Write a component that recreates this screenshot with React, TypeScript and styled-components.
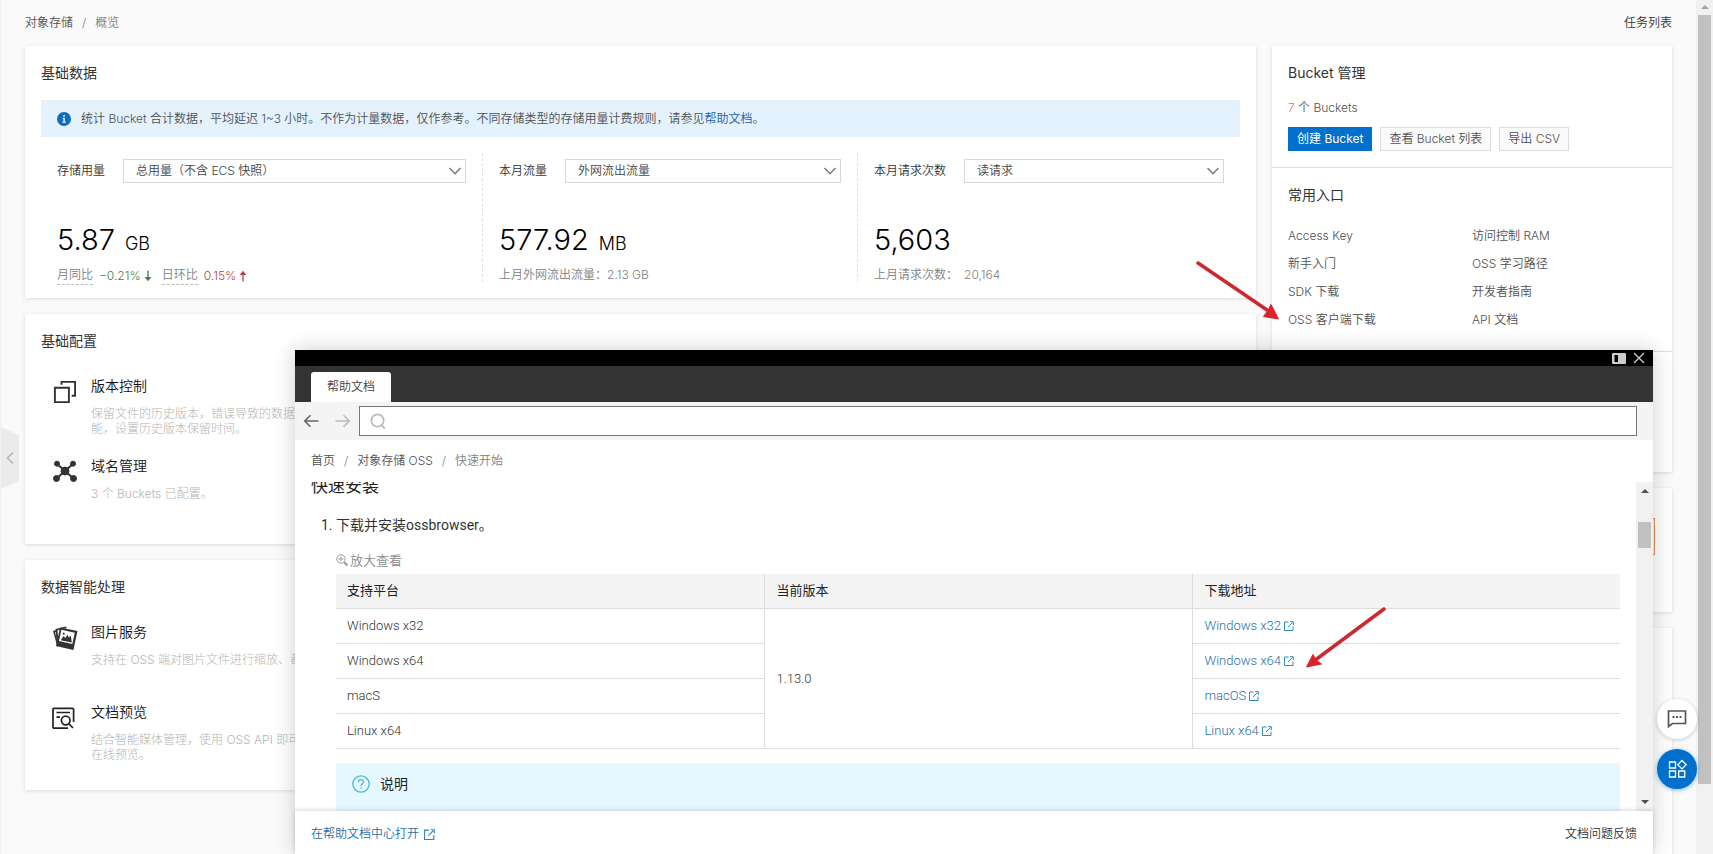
import React from 'react';
import styled, { createGlobalStyle, css } from 'styled-components';

const Global = createGlobalStyle`
  *, *::before, *::after { box-sizing: border-box; }
  html, body, #root { height: 100%; }
  body { margin: 0; background: #fafafa; overflow: hidden; }
  body, button, input, select, table {
    font-family: Inter, "Noto Sans CJK SC", sans-serif;
    font-size: 12px;
    line-height: 16px;
    color: #333;
    font-weight: 350;
  }
  a { color: inherit; text-decoration: none; }
  h1, h2, h3, p, ul, ol { margin: 0; padding: 0; font-weight: 400; }
  ul, ol { list-style: none; }
  svg { display: block; }
`;

/* ---------- page frame ---------- */

const Page = styled.div`
  display: flex;
  height: 100vh;
  overflow: hidden;
  position: relative;
`;

const Main = styled.main`
  flex: 1;
  min-width: 0;
  border-left: 1px solid #f1f1f1;
  padding: 0 24px;
`;

const TopBar = styled.header`
  display: flex;
  justify-content: space-between;
  align-items: center;
  height: 46px;
  padding-bottom: 1px;
`;

const Crumbs = styled.nav`
  display: flex;
  align-items: center;
  gap: 9px;
  color: #808080;
  a { color: #505050; }
`;

const Columns = styled.div`
  display: grid;
  grid-template-columns: minmax(0, 1fr) 400px;
  gap: 16px;
  align-items: start;
`;

const Stack = styled.div`
  display: flex;
  flex-direction: column;
  gap: 16px;
`;

const Card = styled.section<{ $minHeight?: number }>`
  background: #fff;
  box-shadow: 0 1px 4px rgba(0, 0, 0, 0.13);
  min-height: ${p => p.$minHeight ?? 0}px;
`;

const Padded = styled.div`
  padding: 16px;
`;

const CardTitle = styled.h2`
  font-size: 14px;
  line-height: 22px;
  color: #333;
`;

/* ---------- statistics ---------- */

const Notice = styled.div`
  display: flex;
  align-items: center;
  gap: 10px;
  height: 37px;
  margin: 16px 0;
  padding: 0 16px;
  background: #e3f2fd;
  color: #505050;
  a { color: #1a60ad; }
`;

const StatGrid = styled.div`
  display: grid;
  grid-template-columns: 441fr 375fr 383fr;
`;

const Stat = styled.div`
  height: 129px;
  padding: 6px 16px 0;
  & + & { border-left: 1px dashed #e0e0e0; }
`;

const StatHead = styled.label`
  display: flex;
  align-items: center;
  gap: 18px;
  white-space: nowrap;
`;

const SelectWrap = styled.span`
  flex: 1;
  display: grid;
  align-items: center;
  min-width: 0;
  > * { grid-area: 1 / 1; }
  > svg { justify-self: end; margin-right: 4px; pointer-events: none; }
`;

const Select = styled.select`
  appearance: none;
  width: 100%;
  height: 24px;
  padding: 0 24px 0 12px;
  border: 1px solid #d8d8d8;
  border-radius: 0;
  background: #fff;
  color: #444;
`;

const Figure = styled.p`
  display: flex;
  align-items: baseline;
  gap: 10px;
  height: 34px;
  margin-top: 40px;
  font-size: 29px;
  line-height: 34px;
  font-weight: 300;
  color: #000;
  small { font-size: 18px; }
`;

const SubLine = styled.p`
  display: flex;
  align-items: center;
  margin-top: 9px;
  line-height: 18px;
  color: #808080;
  font-weight: 350;
`;

const Term = styled.span`
  border-bottom: 1px dashed #bbb;
  margin-right: 6px;
`;

const Trend = styled.span<{ $up?: boolean }>`
  display: inline-flex;
  align-items: center;
  gap: 3px;
  margin-right: 10px;
  color: ${p => (p.$up ? '#b5443a' : '#3f7d4a')};
`;

const SubValue = styled.span<{ $wide?: boolean }>`
  margin-left: ${p => (p.$wide ? 6 : 0)}px;
`;

/* ---------- feature lists ---------- */

const Feature = styled.li`
  display: grid;
  grid-template-columns: 26px 1fr;
  gap: 13px;
  height: 80px;
  padding-left: 11px;
  &:last-child { height: 72px; }
`;

const FeatureList = styled.ul`
  margin-top: 23px;
`;

const FeatureIcon = styled.span`
  padding-top: 5px;
`;

const FeatureTitle = styled.h3`
  font-size: 14px;
  line-height: 22px;
  color: #111;
  font-weight: 350;
`;

const FeatureText = styled.p`
  margin-top: 9px;
  line-height: 15px;
  color: #b4b4b4;
  font-weight: 300;
  em { font-style: normal; color: #e8a49e; }
`;

/* ---------- bucket side column ---------- */

const Section = styled.div<{ $height: number }>`
  padding: 16px;
  min-height: ${p => p.$height}px;
  & + & { border-top: 1px solid #ddd; }
`;

const Count = styled.p`
  margin: 16px 0 11px;
  color: #505050;
  font-weight: 350;
  em { font-style: normal; color: #e27a55; }
`;

const ButtonRow = styled.div`
  display: flex;
  gap: 8px;
`;

const Button = styled.button<{ $primary?: boolean }>`
  height: 24px;
  padding: 0 8px;
  border: 1px solid #ddd;
  background: #fafafa;
  color: #505050;
  white-space: nowrap;
  ${p => p.$primary && css`
    border-color: #0070cc;
    background: #0070cc;
    color: #fff;
    font-weight: 400;
  `}
`;

const LinkGrid = styled.div`
  display: grid;
  grid-template-columns: 1fr 1fr;
  margin-top: 16px;
  line-height: 28px;
  color: #505050;
`;

const Alert = styled.div`
  height: 37px;
  margin: 14px 1px 0 0;
  border: 1px solid #e5905f;
  background: #fff0e8;
`;

/* ---------- scroll bars ---------- */

const ScrollTrack = styled.div`
  display: flex;
  flex-direction: column;
  align-items: center;
  flex: none;
  width: 17px;
  background: #f1f1f1;
`;

const ScrollArrow = styled.span<{ $down?: boolean; $faint?: boolean }>`
  width: 0;
  border: 4px solid transparent;
  border-top-width: ${p => (p.$down ? 4 : 0)}px;
  border-bottom-width: ${p => (p.$down ? 0 : 4)}px;
  border-${p => (p.$down ? 'top' : 'bottom')}-color: ${p => (p.$faint ? '#a3a3a3' : '#505050')};
  margin: ${p => (p.$down ? 'auto 0 7px' : p.$faint ? '5px 0 6px' : '7px 0 0')};
`;

const PageThumb = styled.span`
  width: 13px;
  height: 90%;
  background: #c1c1c1;
`;

const DocThumb = styled.span`
  width: 13px;
  height: 26px;
  margin-top: 29px;
  background: #c1c1c1;
`;

/* ---------- floating pieces ---------- */

const Collapse = styled.button`
  position: absolute;
  left: 1px;
  top: 427px;
  width: 18px;
  height: 62px;
  padding: 0;
  border: 0;
  background: #ebebeb;
  clip-path: polygon(0 0, 100% 8px, 100% 54px, 0 100%);
`;

const FloatStack = styled.div`
  position: absolute;
  right: 16px;
  bottom: 65px;
  display: flex;
  flex-direction: column;
  gap: 10px;
`;

const RoundButton = styled.button<{ $blue?: boolean }>`
  display: grid;
  place-items: center;
  width: 40px;
  height: 40px;
  padding: 0;
  border: 0;
  border-radius: 50%;
  background: ${p => (p.$blue ? '#0070cc' : '#fff')};
  box-shadow: 0 1px 4px ${p => (p.$blue ? 'rgba(0, 112, 204, 0.5)' : 'rgba(0, 0, 0, 0.2)')};
`;

const Pointer = styled.svg`
  position: absolute;
  pointer-events: none;
`;

/* ---------- help window ---------- */

const Window = styled.section`
  position: absolute;
  left: 295px;
  right: 60px;
  top: 350px;
  bottom: 0;
  display: flex;
  flex-direction: column;
  background: #fff;
  box-shadow: 0 0 20px rgba(0, 0, 0, 0.2);
`;

const TitleBar = styled.div`
  display: flex;
  justify-content: flex-end;
  align-items: center;
  gap: 7px;
  height: 16px;
  padding-right: 8px;
  background: #000;
`;

const PlainButton = styled.button`
  display: grid;
  place-items: center;
  padding: 0;
  border: 0;
  background: none;
`;

const TabBar = styled.div`
  display: flex;
  align-items: flex-end;
  height: 36px;
  padding-left: 16px;
  background: #333;
`;

const Tab = styled.button`
  width: 80px;
  height: 30px;
  padding: 0;
  border: 0;
  border-radius: 3px 3px 0 0;
  background: #fff;
  color: #444;
`;

const NavBar = styled.div`
  display: flex;
  align-items: center;
  height: 38px;
  padding: 0 16px 0 8px;
  background: #f4f4f4;
`;

const NavButton = styled(PlainButton)`
  width: 16px;
  height: 16px;
  margin-right: 16px;
  & + & { margin-right: 8px; }
`;

const SearchBox = styled.div`
  flex: 1;
  display: grid;
  align-items: center;
  > * { grid-area: 1 / 1; }
  > svg { margin-left: 11px; pointer-events: none; }
`;

const SearchInput = styled.input`
  width: 100%;
  height: 30px;
  padding: 0 8px 0 32px;
  border: 1px solid #777;
  background: #fff;
  outline: 0;
`;

const DocCrumbs = styled.div`
  height: 42px;
  padding: 13px 16px 0;
`;

const DocPane = styled.div`
  flex: 1;
  display: flex;
  min-height: 0;
`;

const DocScroll = styled.div`
  flex: 1;
  min-width: 0;
  overflow: hidden;
  display: flex;
  flex-direction: column;
  justify-content: flex-end;
  padding: 0 16px;
  &, table { font-family: Roboto, "Noto Sans CJK SC", sans-serif; }
`;

const DocHeading = styled.h2`
  font-size: 17px;
  line-height: 24px;
  color: #222;
`;

const Steps = styled.ol`
  margin-top: 15px;
  padding-left: 25px;
  list-style: decimal;
  font-size: 14px;
  line-height: 24px;
  color: #333;
`;

const Enlarge = styled(PlainButton)`
  display: flex;
  align-items: center;
  gap: 2px;
  height: 22px;
  margin-top: 12px;
  margin-bottom: 3px;
  font-size: 13px;
  color: #8c8c8c;
`;

const Table = styled.table`
  width: 100%;
  table-layout: fixed;
  border-collapse: collapse;
  font-size: 13px;
  th, td {
    height: 35px;
    padding: 0 11px;
    text-align: left;
    border-bottom: 1px solid #ddd;
    color: #333;
    font-weight: 350;
  }
  th { background: #f4f4f4; color: #222; font-weight: 400; }
  th + th, td + td { padding-left: 12px; }
  th + th, td[rowspan] { border-left: 1px solid #ddd; }
  td[rowspan] { border-right: 1px solid #ddd; }
`;

const DocLink = styled.a<{ $gap?: number }>`
  display: inline-flex;
  align-items: center;
  gap: ${p => p.$gap ?? 3}px;
  && { color: #1f6ea8; }
`;

const Note = styled.div`
  display: flex;
  align-items: center;
  gap: 10px;
  height: 48px;
  margin-top: 14px;
  padding: 0 16px 6px;
  background: #e5f7ff;
  font-size: 14px;
  color: #222;
  font-weight: 400;
`;

const DocFooter = styled.footer`
  display: flex;
  align-items: center;
  justify-content: space-between;
  height: 43px;
  padding: 3px 16px 0;
  box-shadow: 0 -1px 4px rgba(0, 0, 0, 0.16);
  z-index: 1;
`;

/* ---------- icons ---------- */

const Chevron = () => (
  <svg width="14" height="14" viewBox="0 0 14 14" fill="none" stroke="#777" strokeWidth="1.4">
    <path d="M1.5 4 7 9.8 12.5 4" />
  </svg>
);

const InfoIcon = () => (
  <svg width="14" height="14" viewBox="0 0 14 14">
    <circle cx="7" cy="7" r="7" fill="#0f6cbf" />
    <path d="M5.6 5.8h2.2v4h1v1H5.400v-1h1v-3h-.8zM6.3 2.9h1.6v1.7H6.3z" fill="#fff" />
  </svg>
);

const TrendArrow = ({ up }: { up?: boolean }) => (
  <svg width="8" height="12" viewBox="0 0 8 12" fill="none" stroke="currentColor" strokeWidth="1.3">
    {up ? <path d="M4 11.5V2M2 4.300 4 1.800l2 2.500z" fill="currentColor" /> : <path d="M4 .5V10M2 7.700 4 10.200l2-2.500z" fill="currentColor" />}
  </svg>
);

const CopiesIcon = () => (
  <svg width="24" height="24" viewBox="0 0 24 24" fill="none" stroke="#333" strokeWidth="1.9">
    <path d="M2.900 7.800h14v14.300h-14z M9.500 4.800V1.900h13.600v13.800H19.700" />
  </svg>
);

const DomainIcon = () => (
  <svg width="26" height="24" viewBox="0 0 26 24" fill="#333" stroke="#333">
    <path d="M4.500 3.500 21.500 18.500M21.500 3.500 4.500 18.500" strokeWidth="2" />
    <circle cx="13" cy="11" r="4" />
    <circle cx="5" cy="3.700" r="2.500" /><circle cx="21" cy="3.700" r="2.500" />
    <circle cx="4.500" cy="18.500" r="3" /><circle cx="21.500" cy="18.500" r="3" />
  </svg>
);

const PhotosIcon = () => (
  <svg width="26" height="24" viewBox="0 0 26 24" fill="#333">
    <path d="M1 5l4-1 .4 1.6L3 6.2l1.8 7L5.5 21z" />
    <path d="M3.500 3 14 .6l.8 1.4-9.300 2.200 1 14.600L5 21z" />
    <path fillRule="evenodd" d="M8 1.400 25.500 5 21.400 24 4 20zM9.400 3.800 6.900 15l13.400 3L22.800 6.700z" />
    <path d="M8.700 14.300 11.600 10l1.800 2 2-3.200 1.400 2.600 2-1.600 1 6.600zM11 6.600l1.800.4-.4 1.800-1.800-.4z" />
  </svg>
);

const PreviewIcon = () => (
  <svg width="24" height="24" viewBox="0 0 24 24" fill="none" stroke="#222" strokeWidth="1.700">
    <path d="M16 22.200H2a1 1 0 0 1-1-1V3.300a1 1 0 0 1 1-1h18.600a1 1 0 0 1 1 1V16M4.500 6.500h13.500M4.500 11.200h3.500" />
    <circle cx="13.700" cy="14.500" r="4.300" />
    <path d="m16.700 17.700 4.300 4.300" />
  </svg>
);

const ExternalIcon = ({ size = 10 }: { size?: number }) => (
  <svg width={size} height={size} viewBox="0 0 10 10" fill="none" stroke="#2a8ac4">
    <path d="M4.500 1H.5v8.500H9V5.500M4 6 8.500 1.500M6 .7h3.300V4" />
  </svg>
);

const links = [
  ['Access Key', '访问控制 RAM'],
  ['新手入门', 'OSS 学习路径'],
  ['SDK 下载', '开发者指南'],
  ['OSS 客户端下载', 'API 文档'],
];

const platforms = [
  ['Windows x32', 'Windows x32'],
  ['Windows x64', 'Windows x64'],
  ['macS', 'macOS'],
  ['Linux x64', 'Linux x64'],
];

function StatSelect({ label, value }: { label: string; value: string }) {
  return (
    <StatHead>
      {label}
      <SelectWrap>
        <Select defaultValue={value}><option>{value}</option></Select>
        <Chevron />
      </SelectWrap>
    </StatHead>
  );
}

function HelpWindow() {
  return (
    <Window aria-label="帮助文档">
      <TitleBar>
        <PlainButton aria-label="停靠">
          <svg width="14" height="11" viewBox="0 0 14 11">
            <path fillRule="evenodd" d="M1 0h12a1 1 0 0 1 1 1v9a1 1 0 0 1-1 1H1a1 1 0 0 1-1-1V1a1 1 0 0 1 1-1zM2.500 2v7h3.500V2z" fill="#ccc" />
          </svg>
        </PlainButton>
        <PlainButton aria-label="关闭">
          <svg width="12" height="12" viewBox="0 0 12 12" stroke="#ccc" strokeWidth="1.400"><path d="m1 1 10 10M11 1 1 11" /></svg>
        </PlainButton>
      </TitleBar>
      <TabBar><Tab>帮助文档</Tab></TabBar>
      <NavBar>
        <NavButton aria-label="后退">
          <svg width="16" height="14" viewBox="0 0 16 14" fill="none" stroke="#666" strokeWidth="1.600"><path d="M15.500 7H2M7.500 1.200 1.700 7l5.800 5.800" /></svg>
        </NavButton>
        <NavButton aria-label="前进">
          <svg width="16" height="14" viewBox="0 0 16 14" fill="none" stroke="#bbb" strokeWidth="1.600"><path d="M.5 7H14M8.500 1.200 14.300 7l-5.800 5.800" /></svg>
        </NavButton>
        <SearchBox>
          <SearchInput type="search" aria-label="搜索" />
          <svg width="16" height="16" viewBox="0 0 16 16" fill="none" stroke="#bbb" strokeWidth="1.800"><circle cx="7.500" cy="7.500" r="6.200" /><path d="m11.500 12 3.300 3.300" /></svg>
        </SearchBox>
      </NavBar>
      <DocCrumbs>
        <Crumbs>
          <a href="#home">首页</a><span>/</span><a href="#oss">对象存储 OSS</a><span>/</span><span>快速开始</span>
        </Crumbs>
      </DocCrumbs>
      <DocPane>
        <DocScroll>
          <DocHeading>快速安装</DocHeading>
          <Steps>
            <li>
              下载并安装ossbrowser。
              <Enlarge>
                <svg width="12" height="12" viewBox="0 0 12 12" fill="none" stroke="#999"><circle cx="5" cy="5" r="4.200" /><path d="M2.500 5h5M5 2.500v5" /><path d="m8.200 8.200 3.300 3.300" strokeWidth="2" /></svg>
                放大查看
              </Enlarge>
              <Table>
                <thead><tr><th>支持平台</th><th>当前版本</th><th>下载地址</th></tr></thead>
                <tbody>
                  {platforms.map(([name, link], i) => (
                    <tr key={name}>
                      <td>{name}</td>
                      {i === 0 && <td rowSpan={4}>1.13.0</td>}
                      <td><DocLink href="#download">{link}<ExternalIcon /></DocLink></td>
                    </tr>
                  ))}
                </tbody>
              </Table>
              <Note>
                <svg width="18" height="18" viewBox="0 0 18 18" fill="none" stroke="#4fb6dc" strokeWidth="1.300"><circle cx="9" cy="9" r="8.200" /><path d="M6.500 7.200c0-3.600 5-3.300 5-.4 0 1.900-2.500 2-2.500 4.200M9 12.300v1.500" /></svg>
                说明
              </Note>
            </li>
          </Steps>
        </DocScroll>
        <ScrollTrack><ScrollArrow /><DocThumb /><ScrollArrow $down /></ScrollTrack>
      </DocPane>
      <DocFooter>
        <DocLink href="#center" $gap={5}>在帮助文档中心打开<ExternalIcon size={11} /></DocLink>
        <a href="#feedback">文档问题反馈</a>
      </DocFooter>
    </Window>
  );
}

export default function App() {
  return (
    <>
      <Global />
      <Page>
        <Main>
          <TopBar>
            <Crumbs><a href="#oss">对象存储</a><span>/</span><span>概览</span></Crumbs>
            <a href="#tasks">任务列表</a>
          </TopBar>
          <Columns>
            <Stack>
              <Card>
                <Padded>
                  <CardTitle>基础数据</CardTitle>
                  <Notice>
                    <InfoIcon />
                    <span>统计 Bucket 合计数据，平均延迟 1~3 小时。不作为计量数据，仅作参考。不同存储类型的存储用量计费规则，请参见<a href="#help">帮助文档</a>。</span>
                  </Notice>
                  <StatGrid>
                    <Stat>
                      <StatSelect label="存储用量" value="总用量（不含 ECS 快照）" />
                      <Figure>5.87<small>GB</small></Figure>
                      <SubLine>
                        <Term>月同比</Term><Trend>−0.21%<TrendArrow /></Trend>
                        <Term>日环比</Term><Trend $up>0.15%<TrendArrow up /></Trend>
                      </SubLine>
                    </Stat>
                    <Stat>
                      <StatSelect label="本月流量" value="外网流出流量" />
                      <Figure>577.92<small>MB</small></Figure>
                      <SubLine>上月外网流出流量：<SubValue>2.13 GB</SubValue></SubLine>
                    </Stat>
                    <Stat>
                      <StatSelect label="本月请求次数" value="读请求" />
                      <Figure>5,603</Figure>
                      <SubLine>上月请求次数：<SubValue $wide>20,164</SubValue></SubLine>
                    </Stat>
                  </StatGrid>
                </Padded>
              </Card>
              <Card $minHeight={230}>
                <Padded>
                  <CardTitle>基础配置</CardTitle>
                  <FeatureList>
                    <Feature>
                      <FeatureIcon><CopiesIcon /></FeatureIcon>
                      <div>
                        <FeatureTitle>版本控制</FeatureTitle>
                        <FeatureText>保留文件的历史版本，错误导致的数据<br />能，设置历史版本保留时间。</FeatureText>
                      </div>
                    </Feature>
                    <Feature>
                      <FeatureIcon><DomainIcon /></FeatureIcon>
                      <div>
                        <FeatureTitle>域名管理</FeatureTitle>
                        <FeatureText><em>3</em> 个 Buckets 已配置。</FeatureText>
                      </div>
                    </Feature>
                  </FeatureList>
                </Padded>
              </Card>
              <Card $minHeight={230}>
                <Padded>
                  <CardTitle>数据智能处理</CardTitle>
                  <FeatureList>
                    <Feature>
                      <FeatureIcon><PhotosIcon /></FeatureIcon>
                      <div>
                        <FeatureTitle>图片服务</FeatureTitle>
                        <FeatureText>支持在 OSS 端对图片文件进行缩放、裁</FeatureText>
                      </div>
                    </Feature>
                    <Feature>
                      <FeatureIcon><PreviewIcon /></FeatureIcon>
                      <div>
                        <FeatureTitle>文档预览</FeatureTitle>
                        <FeatureText>结合智能媒体管理，使用 OSS API 即可<br />在线预览。</FeatureText>
                      </div>
                    </Feature>
                  </FeatureList>
                </Padded>
              </Card>
            </Stack>
            <Stack>
              <Card>
                <Section $height={121}>
                  <CardTitle>Bucket 管理</CardTitle>
                  <Count><em>7</em> 个 Buckets</Count>
                  <ButtonRow>
                    <Button $primary>创建 Bucket</Button>
                    <Button>查看 Bucket 列表</Button>
                    <Button>导出 CSV</Button>
                  </ButtonRow>
                </Section>
                <Section $height={184}>
                  <CardTitle>常用入口</CardTitle>
                  <LinkGrid>
                    {links.flat().map(t => <a key={t} href="#link">{t}</a>)}
                  </LinkGrid>
                </Section>
                <Section $height={121} />
              </Card>
              <Card $minHeight={124}><Padded><Alert /></Padded></Card>
              <Card $minHeight={300} />
            </Stack>
          </Columns>
        </Main>
        <ScrollTrack><ScrollArrow $faint /><PageThumb /></ScrollTrack>

        <Collapse aria-label="展开导航">
          <svg width="18" height="14" viewBox="0 0 18 14" fill="none" stroke="#b5b5b5" strokeWidth="1.600"><path d="M12 1.500 6.500 7l5.500 5.500" /></svg>
        </Collapse>
        <HelpWindow />
        <FloatStack>
          <RoundButton aria-label="反馈">
            <svg width="20" height="20" viewBox="0 0 20 20" fill="none" stroke="#555" strokeWidth="1.700">
              <path d="M1.500 17.500V2h17v12.500H5.500z" /><path d="M5.500 8h2M9 8h2M12.500 8h2" strokeWidth="2" />
            </svg>
          </RoundButton>
          <RoundButton $blue aria-label="应用">
            <svg width="20" height="20" viewBox="0 0 20 20" fill="none" stroke="#fff" strokeWidth="1.300">
              <path d="M2.500 3h6v6h-6zM2.500 12h6v6h-6zM11.700 12h6v6h-6zM15 1.500l4.200 4.200-4.200 4.200-4.200-4.200z" />
            </svg>
          </RoundButton>
        </FloatStack>
        <Pointer style={{ left: 1194, top: 258 }} width="90" height="66" viewBox="0 0 90 66">
          <path d="M4 5 76 54" stroke="#cb2830" strokeWidth="3.500" strokeLinecap="round" />
          <path d="M84.500 61 69.500 58.500 74 52.500 77 46.500z" fill="#e21f26" stroke="#cb2830" />
        </Pointer>
        <Pointer style={{ left: 1302, top: 604 }} width="88" height="68" viewBox="0 0 88 68">
          <path d="M82 5 12 57" stroke="#cb2830" strokeWidth="3.500" strokeLinecap="round" />
          <path d="M4.500 63 11 50.500 14 56 19.500 60z" fill="#e21f26" stroke="#cb2830" />
        </Pointer>
      </Page>
    </>
  );
}
